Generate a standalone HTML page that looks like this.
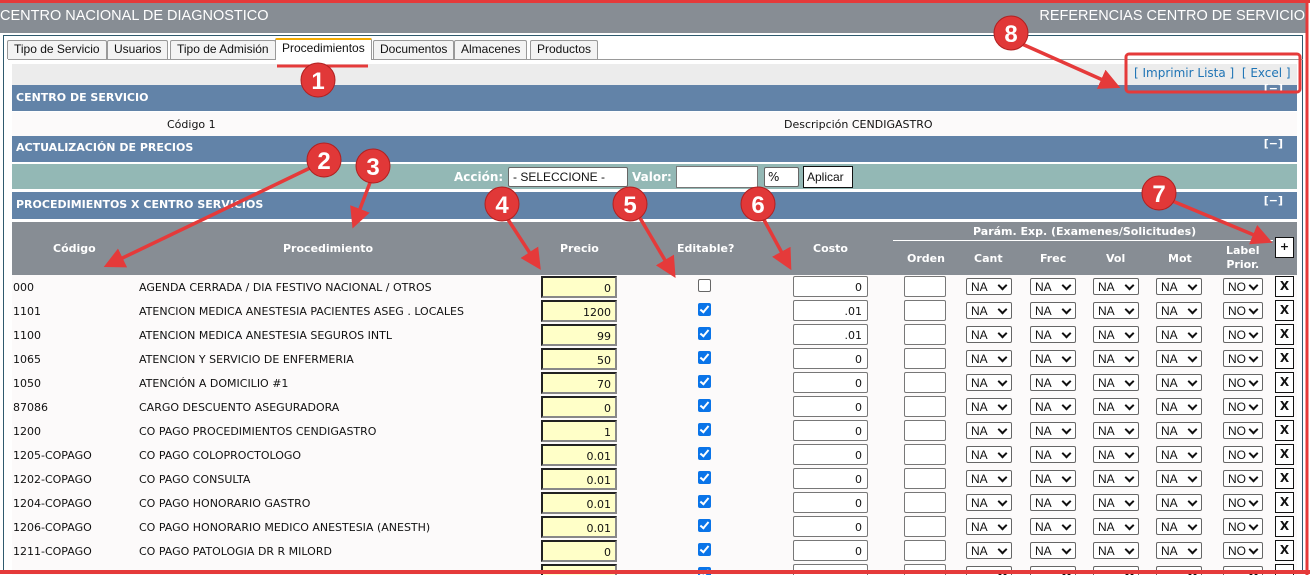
<!DOCTYPE html>
<html style="width:1310px;height:575px;overflow:hidden"><head><meta charset="utf-8">
<style>
*{box-sizing:border-box;margin:0;padding:0}
body{width:1310px;height:575px;overflow:hidden;background:#fff;font-family:"DejaVu Sans","Liberation Sans",sans-serif;font-size:11px;color:#111;position:relative}
.a{position:absolute}
.hdr{left:0;top:3px;width:1307px;height:30px;background:#878d94;color:#fff;font-family:"Liberation Sans",sans-serif;font-size:14.5px}
.panel{left:3px;top:35px;width:1300px;height:536px;border:1px solid #2f5a6e;background:#fff}
.tab{top:40px;height:19px;border:1px solid #999;border-bottom:none;background:#f3f3f3;font-family:"Liberation Sans",sans-serif;font-size:12px;padding:1px 6px;border-radius:2px 2px 0 0}
.tab.on{background:#fff;border-top:2px solid #f2a900;height:22px;top:38px}
.bar{left:12px;width:1285px;background:#6283a8;color:#fff;font-weight:bold;font-size:11px;padding-left:4px}
.mn{right:14px;color:#fff;font-weight:bold;font-size:11px}
.hd{color:#fff;font-weight:bold;font-size:11px;text-align:center}
.row{left:12px;width:1285px;height:24px;background:#fcfafa}
.row div{position:absolute}
.t{top:6px;font-size:11px}
.pr{left:529px;top:1px;width:76px;height:22px;background:#ffffc8;border:2px solid #222;border-color:#222 #888 #888 #222;text-align:right;padding:4px 4px 0 0;font-size:11px}
.cb{left:686px;top:4px;width:13px;height:13px;border-radius:2px;background:#0a74e8}
.cb::after{content:"";position:absolute;left:4px;top:1px;width:3px;height:7px;border:solid #fff;border-width:0 2px 2px 0;transform:rotate(40deg)}
.cb.off{background:#fff;border:1px solid #666}
.cb.off::after{display:none}
.co{left:781px;top:1px;width:75px;height:21px;border:1px solid #777;border-radius:2px;background:#fff;text-align:right;padding:4px 5px 0 0}
.or{left:892px;top:1px;width:42px;height:21px;border:1px solid #777;border-radius:2px;background:#fff}
.s{top:3px;width:46px;height:17px;border:1px solid #666;border-radius:2px;background:#fff;font-family:"Liberation Sans",sans-serif;font-size:12px;padding:1px 0 0 4px}
.s::after{content:"";position:absolute;right:5px;top:3px;width:5px;height:5px;border:solid #111;border-width:0 2px 2px 0;transform:rotate(45deg)}
.x{left:1263px;top:1px;width:19px;height:21px;border:1px solid #111;background:#fff;font-weight:bold;font-size:12px;text-align:center;line-height:19px}
</style></head><body>
<div class="a" style="left:0;top:0;width:1310px;height:3px;background:#e53a3a"></div>
<div class="a hdr"><span class="a" style="left:0;top:5px">CENTRO NACIONAL DE DIAGNOSTICO</span><span class="a" style="right:2px;top:5px">REFERENCIAS CENTRO DE SERVICIO</span></div>
<div class="a panel"></div>
<div class="a" style="left:8px;top:59px;width:1295px;height:1px;background:#999"></div>
<div class="a tab" style="left:7px">Tipo de Servicio</div>
<div class="a tab" style="left:107px">Usuarios</div>
<div class="a tab" style="left:170px">Tipo de Admisión</div>
<div class="a tab on" style="left:275px">Procedimientos</div>
<div class="a tab" style="left:373px">Documentos</div>
<div class="a tab" style="left:454px">Almacenes</div>
<div class="a tab" style="left:530px">Productos</div>
<div class="a" style="left:12px;top:64px;width:1285px;height:21px;background:#ececec"></div>
<div class="a" style="left:1134px;top:66px;color:#1f74b5;font-size:12px">[ Imprimir Lista ] &nbsp;[ Excel ]</div>
<div class="a bar" style="top:85px;height:26px;line-height:26px">CENTRO DE SERVICIO<span class="a mn" style="top:-6px;line-height:20px">[−]</span></div>
<div class="a" style="left:12px;top:112px;width:1285px;height:24px;background:#fcfafa"><span class="a" style="left:155px;top:6px">Código 1</span><span class="a" style="left:772px;top:6px">Descripción CENDIGASTRO</span></div>
<div class="a bar" style="top:136px;height:26px;line-height:24px">ACTUALIZACIÓN DE PRECIOS<span class="a mn" style="top:-4px">[−]</span></div>
<div class="a" style="left:12px;top:164px;width:1285px;height:25px;background:#93b8b5"></div>
<div class="a hd" style="left:454px;top:170px;font-size:12px">Acción:</div>
<div class="a" style="left:508px;top:167px;width:120px;height:20px;border:1px solid #666;border-radius:2px;background:#fff;font-family:'Liberation Sans',sans-serif;font-size:12px;padding:2px 4px">- SELECCIONE -</div>
<div class="a hd" style="left:632px;top:170px;font-size:12px">Valor:</div>
<div class="a" style="left:676px;top:166px;width:82px;height:22px;border:1px solid #777;background:#fff"></div>
<div class="a" style="left:764px;top:167px;width:35px;height:20px;border:1px solid #666;border-radius:2px;background:#fff;font-size:12px;padding:2px 3px">%</div>
<div class="a" style="left:803px;top:166px;width:50px;height:22px;border:1px solid #111;background:#fff;font-size:12px;padding:3px 3px;font-family:'Liberation Sans',sans-serif">Aplicar</div>
<div class="a bar" style="top:192px;height:27px;line-height:26px">PROCEDIMIENTOS X CENTRO SERVICIOS<span class="a mn" style="top:-4px">[−]</span></div>
<div class="a" style="left:12px;top:222px;width:1285px;height:53px;background:#878d94"></div>
<div class="a hd" style="left:53px;top:242px">Código</div>
<div class="a hd" style="left:283px;top:242px">Procedimiento</div>
<div class="a hd" style="left:560px;top:242px">Precio</div>
<div class="a hd" style="left:677px;top:242px">Editable?</div>
<div class="a hd" style="left:813px;top:242px">Costo</div>
<div class="a hd" style="left:973px;top:225px">Parám. Exp. (Examenes/Solicitudes)</div>
<div class="a" style="left:893px;top:240px;width:380px;height:1px;background:#fff"></div>
<div class="a hd" style="left:907px;top:252px">Orden</div>
<div class="a hd" style="left:974px;top:252px">Cant</div>
<div class="a hd" style="left:1040px;top:252px">Frec</div>
<div class="a hd" style="left:1106px;top:252px">Vol</div>
<div class="a hd" style="left:1168px;top:252px">Mot</div>
<div class="a hd" style="left:1226px;top:244px;line-height:14px">Label<br>Prior.</div>
<div class="a" style="left:1275px;top:237px;width:19px;height:21px;border:1px solid #111;background:#fff;font-weight:bold;text-align:center;line-height:18px">+</div>

<div class="a row" style="top:275px"><div class="t" style="left:1px">000</div><div class="t" style="left:127px">AGENDA CERRADA / DIA FESTIVO NACIONAL / OTROS</div><div class="pr">0</div><div class="cb off"></div><div class="co">0</div><div class="or"></div><div class="s" style="left:954px">NA</div><div class="s" style="left:1018px">NA</div><div class="s" style="left:1081px">NA</div><div class="s" style="left:1144px">NA</div><div class="s" style="left:1211px;width:40px">NO</div><div class="x">X</div></div>
<div class="a row" style="top:299px"><div class="t" style="left:1px">1101</div><div class="t" style="left:127px">ATENCION MEDICA ANESTESIA PACIENTES ASEG . LOCALES</div><div class="pr">1200</div><div class="cb"></div><div class="co">.01</div><div class="or"></div><div class="s" style="left:954px">NA</div><div class="s" style="left:1018px">NA</div><div class="s" style="left:1081px">NA</div><div class="s" style="left:1144px">NA</div><div class="s" style="left:1211px;width:40px">NO</div><div class="x">X</div></div>
<div class="a row" style="top:323px"><div class="t" style="left:1px">1100</div><div class="t" style="left:127px">ATENCION MEDICA ANESTESIA SEGUROS INTL</div><div class="pr">99</div><div class="cb"></div><div class="co">.01</div><div class="or"></div><div class="s" style="left:954px">NA</div><div class="s" style="left:1018px">NA</div><div class="s" style="left:1081px">NA</div><div class="s" style="left:1144px">NA</div><div class="s" style="left:1211px;width:40px">NO</div><div class="x">X</div></div>
<div class="a row" style="top:347px"><div class="t" style="left:1px">1065</div><div class="t" style="left:127px">ATENCION Y SERVICIO DE ENFERMERIA</div><div class="pr">50</div><div class="cb"></div><div class="co">0</div><div class="or"></div><div class="s" style="left:954px">NA</div><div class="s" style="left:1018px">NA</div><div class="s" style="left:1081px">NA</div><div class="s" style="left:1144px">NA</div><div class="s" style="left:1211px;width:40px">NO</div><div class="x">X</div></div>
<div class="a row" style="top:371px"><div class="t" style="left:1px">1050</div><div class="t" style="left:127px">ATENCIÓN A DOMICILIO #1</div><div class="pr">70</div><div class="cb"></div><div class="co">0</div><div class="or"></div><div class="s" style="left:954px">NA</div><div class="s" style="left:1018px">NA</div><div class="s" style="left:1081px">NA</div><div class="s" style="left:1144px">NA</div><div class="s" style="left:1211px;width:40px">NO</div><div class="x">X</div></div>
<div class="a row" style="top:395px"><div class="t" style="left:1px">87086</div><div class="t" style="left:127px">CARGO DESCUENTO ASEGURADORA</div><div class="pr">0</div><div class="cb"></div><div class="co">0</div><div class="or"></div><div class="s" style="left:954px">NA</div><div class="s" style="left:1018px">NA</div><div class="s" style="left:1081px">NA</div><div class="s" style="left:1144px">NA</div><div class="s" style="left:1211px;width:40px">NO</div><div class="x">X</div></div>
<div class="a row" style="top:419px"><div class="t" style="left:1px">1200</div><div class="t" style="left:127px">CO PAGO PROCEDIMIENTOS CENDIGASTRO</div><div class="pr">1</div><div class="cb"></div><div class="co">0</div><div class="or"></div><div class="s" style="left:954px">NA</div><div class="s" style="left:1018px">NA</div><div class="s" style="left:1081px">NA</div><div class="s" style="left:1144px">NA</div><div class="s" style="left:1211px;width:40px">NO</div><div class="x">X</div></div>
<div class="a row" style="top:443px"><div class="t" style="left:1px">1205-COPAGO</div><div class="t" style="left:127px">CO PAGO COLOPROCTOLOGO</div><div class="pr">0.01</div><div class="cb"></div><div class="co">0</div><div class="or"></div><div class="s" style="left:954px">NA</div><div class="s" style="left:1018px">NA</div><div class="s" style="left:1081px">NA</div><div class="s" style="left:1144px">NA</div><div class="s" style="left:1211px;width:40px">NO</div><div class="x">X</div></div>
<div class="a row" style="top:467px"><div class="t" style="left:1px">1202-COPAGO</div><div class="t" style="left:127px">CO PAGO CONSULTA</div><div class="pr">0.01</div><div class="cb"></div><div class="co">0</div><div class="or"></div><div class="s" style="left:954px">NA</div><div class="s" style="left:1018px">NA</div><div class="s" style="left:1081px">NA</div><div class="s" style="left:1144px">NA</div><div class="s" style="left:1211px;width:40px">NO</div><div class="x">X</div></div>
<div class="a row" style="top:491px"><div class="t" style="left:1px">1204-COPAGO</div><div class="t" style="left:127px">CO PAGO HONORARIO GASTRO</div><div class="pr">0.01</div><div class="cb"></div><div class="co">0</div><div class="or"></div><div class="s" style="left:954px">NA</div><div class="s" style="left:1018px">NA</div><div class="s" style="left:1081px">NA</div><div class="s" style="left:1144px">NA</div><div class="s" style="left:1211px;width:40px">NO</div><div class="x">X</div></div>
<div class="a row" style="top:515px"><div class="t" style="left:1px">1206-COPAGO</div><div class="t" style="left:127px">CO PAGO HONORARIO MEDICO ANESTESIA (ANESTH)</div><div class="pr">0.01</div><div class="cb"></div><div class="co">0</div><div class="or"></div><div class="s" style="left:954px">NA</div><div class="s" style="left:1018px">NA</div><div class="s" style="left:1081px">NA</div><div class="s" style="left:1144px">NA</div><div class="s" style="left:1211px;width:40px">NO</div><div class="x">X</div></div>
<div class="a row" style="top:539px"><div class="t" style="left:1px">1211-COPAGO</div><div class="t" style="left:127px">CO PAGO PATOLOGIA DR R MILORD</div><div class="pr">0</div><div class="cb"></div><div class="co">0</div><div class="or"></div><div class="s" style="left:954px">NA</div><div class="s" style="left:1018px">NA</div><div class="s" style="left:1081px">NA</div><div class="s" style="left:1144px">NA</div><div class="s" style="left:1211px;width:40px">NO</div><div class="x">X</div></div>
<div class="a row" style="top:563px;height:12px;overflow:hidden"><div class="pr"></div><div class="cb"></div><div class="co"></div><div class="or"></div><div class="s" style="left:954px"></div><div class="s" style="left:1018px"></div><div class="s" style="left:1081px"></div><div class="s" style="left:1144px"></div><div class="s" style="left:1211px;width:40px"></div><div class="x"></div></div>

<svg class="a" style="left:0;top:0" width="1310" height="575" viewBox="0 0 1310 575">
<defs><marker id="ah" markerWidth="6" markerHeight="6" refX="4" refY="3" orient="auto"><path d="M0,0 L6,3 L0,6 z" fill="#e53a3a"/></marker></defs>
<g stroke="#e53a3a" stroke-width="3.5" fill="none" marker-end="url(#ah)">
<line x1="310" y1="168" x2="110" y2="264"/>
<line x1="371" y1="180" x2="355" y2="222"/>
<line x1="507" y1="218" x2="537" y2="264"/>
<line x1="640" y1="218" x2="672" y2="272"/>
<line x1="763" y1="218" x2="788" y2="264"/>
<line x1="1170" y1="200" x2="1266" y2="240"/>
<line x1="1022" y1="44" x2="1114" y2="85"/>
</g>
<rect x="1126" y="54" width="174" height="38" fill="none" stroke="#e53a3a" stroke-width="3" rx="3"/>
<line x1="277" y1="66" x2="368" y2="66" stroke="#e53a3a" stroke-width="3"/>
<line x1="1307" y1="3" x2="1307" y2="575" stroke="#e53a3a" stroke-width="3"/>
<line x1="0" y1="572" x2="1310" y2="572" stroke="#e53a3a" stroke-width="4"/>
<g fill="#e13838" stroke="#b02020" stroke-width="1">
<circle cx="318" cy="80" r="17"/><circle cx="324" cy="160" r="17"/><circle cx="373" cy="166" r="17"/><circle cx="502" cy="204" r="17"/><circle cx="630" cy="204" r="17"/><circle cx="758" cy="204" r="17"/><circle cx="1159" cy="193" r="17"/><circle cx="1011" cy="33" r="17"/>
</g>
<g fill="#fff" font-family="Liberation Sans, sans-serif" font-size="24" font-weight="bold" text-anchor="middle">
<text x="318" y="89">1</text><text x="324" y="169">2</text><text x="373" y="175">3</text><text x="502" y="213">4</text><text x="630" y="213">5</text><text x="758" y="213">6</text><text x="1159" y="202">7</text><text x="1011" y="42">8</text>
</g>
</svg>
</body></html>
